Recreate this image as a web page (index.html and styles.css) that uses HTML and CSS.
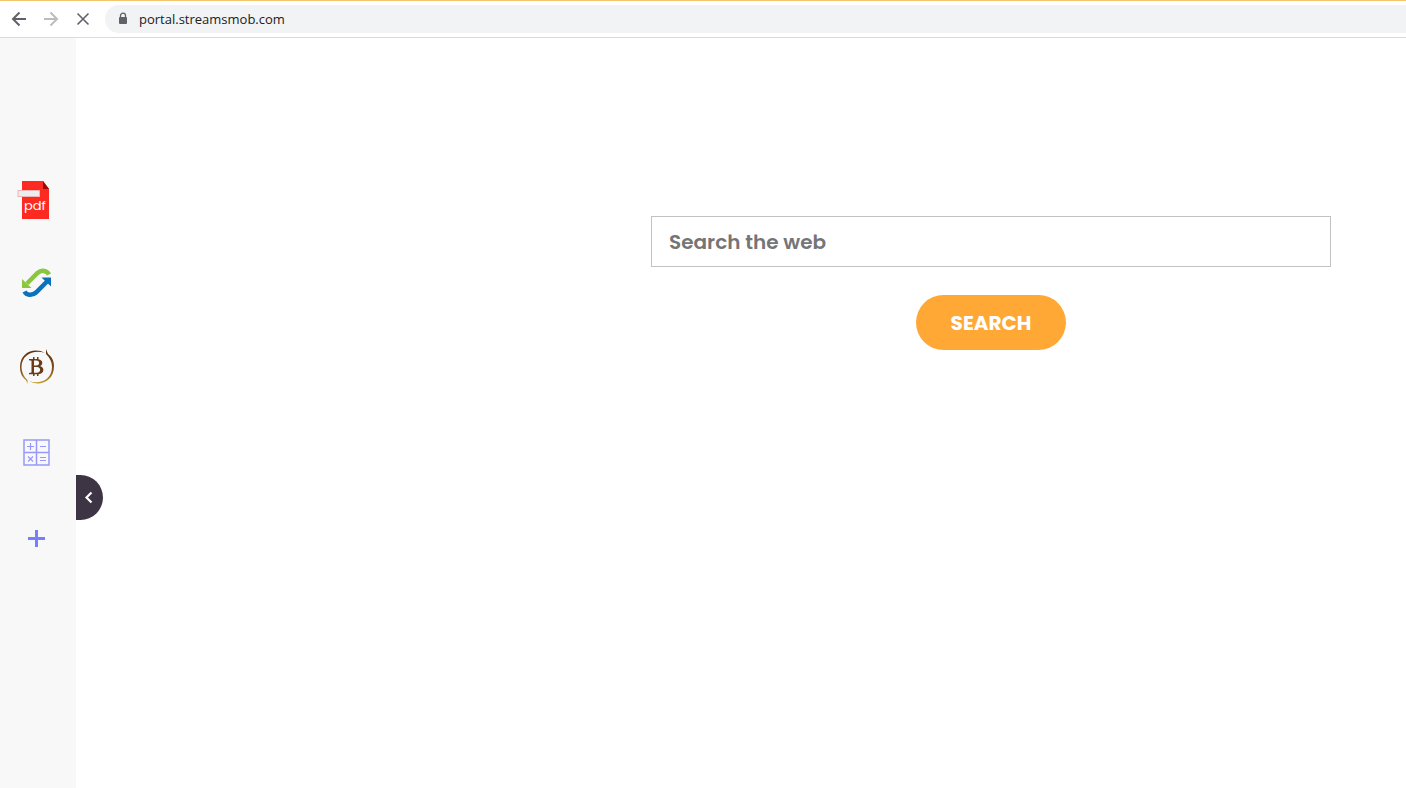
FILE: index.html
```html
<!DOCTYPE html>
<html lang="en">
<head>
    <meta charset="UTF-8">
    <meta name="viewport" content="width=device-width, initial-scale=1.0">
    <title>portal.streamsmob.com</title>
    <link rel="stylesheet" href="styles.css">
</head>
<body>
    <header class="toolbar">
        <button type="button" class="nav-btn" aria-label="Back">
            <svg width="16" height="16" viewBox="0 0 16 16"><path d="M15 8H2.500M8.500 1.500L2 8l6.500 6.500"/></svg>
        </button>
        <button type="button" class="nav-btn disabled" aria-label="Forward" disabled>
            <svg width="16" height="16" viewBox="0 0 16 16"><path d="M1 8h12.500M7.500 1.500L14 8l-6.500 6.500"/></svg>
        </button>
        <button type="button" class="nav-btn stop" aria-label="Stop loading">
            <svg width="16" height="16" viewBox="0 0 16 16"><path d="M2.500 2.500l11 11M13.500 2.500l-11 11"/></svg>
        </button>
        <div class="address">
            <svg class="lock" width="10" height="14" viewBox="0 0 10 14">
                <path d="M2.500 6V3.700a2.500 2.500 0 0 1 5 0V6" fill="none" stroke="#5f6368" stroke-width="1.300"/>
                <rect x="1" y="5" width="8" height="7" rx="1" fill="#5f6368"/>
            </svg>
            <input type="text" class="url" aria-label="Address" value="portal.streamsmob.com">
        </div>
    </header>

    <div class="page">
        <nav class="sidebar">
            <a href="#" class="app" aria-label="PDF">
                <svg width="54" height="54" viewBox="0 -3 54 54">
                    <path d="M12 7h21l6 8v30H12z" fill="#fc2a20"/>
                    <path d="M33 7l6 8h-6z" fill="#980d08"/>
                    <rect x="8" y="16.500" width="21.500" height="6" fill="#ececec" stroke="#e9b5b5"/>
                    <text x="14" y="36" class="pdf-text">pdf</text>
                </svg>
            </a>
            <a href="#" class="app" aria-label="Convert">
                <svg width="54" height="54" viewBox="0 0 54 54">
                    <path d="M39 18.500c-2-4-7.500-5-11.500-1.500L17 27.500" fill="none" stroke="#8bc63f" stroke-width="4.500"/>
                    <path d="M12 23v9h9.500z" fill="#8bc63f"/>
                    <path d="M14.500 35.500c2 4 7.500 4.500 11.500 1L37 25.500" fill="none" stroke="#0a71bd" stroke-width="4.500"/>
                    <path d="M31.500 21.500H41v9z" fill="#0a71bd"/>
                </svg>
            </a>
            <a href="#" class="app" aria-label="Bitcoin">
                <svg width="54" height="54" viewBox="0 1 54 54">
                    <defs>
                        <linearGradient id="gold" x1="0" y1="0" x2="0" y2="1">
                            <stop offset="0" stop-color="#5d300f"/>
                            <stop offset=".6" stop-color="#84501a"/>
                            <stop offset="1" stop-color="#c3a12c"/>
                        </linearGradient>
                    </defs>
                    <path fill="url(#gold)" d="M35 13C25 7 10 12 10 27c0 7 3 11 6 13l1.500 4v-4C14 37 11.500 32 11.500 27c0-13 13-18 23.500-14z"/>
                    <path fill="url(#gold)" d="M19 41c10 6 25 1 25-15 0-6-3-10-6-12l-2-5v5c4 4 6 8 6 13 0 13-13 18-23 14z"/>
                    <path fill="#6b3b18" fill-rule="evenodd" d="M19 19h4v-2h1.500v2H27v-2h1.500v2.200c4.500.6 5 5.500 1.500 6.800 5 1.200 4.500 7.700-1.500 8.200V36H27v-1.800h-2.500V36H23v-1.800h-4V33l2.500-.5V20.700L19 20.200zM24 20.500v5h2.500c3.500 0 3.500-5 0-5zM24 27v5.700h3c4.200 0 4.200-5.700 0-5.700z"/>
                </svg>
            </a>
            <a href="#" class="app" aria-label="Calculator">
                <svg width="54" height="54" viewBox="0 0 54 54" fill="none" stroke="#9698fa">
                    <path d="M14 14h25v25H14zM26.500 14v25M14 26.500h25" stroke-width="1.500"/>
                    <path d="M17 20.500h7M20.500 17v7M30 20.500h6M18 30.500l5 5M23 30.500l-5 5M30 31.500h6M30 34.500h6" stroke-width="1.200"/>
                </svg>
            </a>
            <button type="button" class="app" aria-label="Add">
                <svg width="54" height="54" viewBox="0 -1 54 54"><path d="M18 25h17v3H18zM25 18h3v17h-3z" fill="#7480ff"/></svg>
            </button>
            <button type="button" class="collapse" aria-label="Collapse sidebar">
                <svg width="10" height="14" viewBox="0 0 10 14"><path d="M7.500 1.500L2.500 6.500l5 5" fill="none" stroke="#fff" stroke-width="2.200"/></svg>
            </button>
        </nav>

        <main class="content">
            <form class="search-form">
                <input type="text" class="search-input" placeholder="Search the web" aria-label="Search the web">
                <button type="submit" class="search-btn">SEARCH</button>
            </form>
        </main>
    </div>
</body>
</html>
```

FILE: styles.css
```css
* {
    box-sizing: border-box;
}
body {
    margin: 0;
    min-height: 100vh;
    display: flex;
    flex-direction: column;
    background-color: #fff;
    font-family: Poppins, Inter, sans-serif;
}
button {
    padding: 0;
    border: none;
    background: none;
    cursor: pointer;
}
svg {
    display: block;
}

.toolbar {
    display: flex;
    align-items: center;
    gap: 16px;
    height: 38px;
    padding-left: 11px;
    border-top: 1px solid #f2c66d;
    border-bottom: 1px solid #dadbdd;
}
.nav-btn path {
    fill: none;
    stroke: #5f6368;
    stroke-width: 2;
}
.nav-btn.disabled path {
    stroke: #babcbe;
}
.nav-btn.stop path {
    stroke-width: 1.6;
}
.address {
    flex: 1;
    display: flex;
    align-items: center;
    gap: 11px;
    height: 28px;
    margin-left: -2px;
    padding-left: 13px;
    border-radius: 14px 0 0 14px;
    background-color: #f1f3f4;
}
.url {
    flex: 1;
    padding: 0;
    border: none;
    outline: none;
    background: none;
    color: #202124;
    font: 13px "Segoe UI", "Open Sans", sans-serif;
}

.page {
    flex: 1;
    display: flex;
}
.sidebar {
    position: relative;
    display: flex;
    flex-direction: column;
    align-items: flex-start;
    gap: 31px;
    width: 76px;
    padding: 133px 0 0 10px;
    background-color: #f8f8f8;
}
.pdf-text {
    fill: #fff;
    font: 400 13px Poppins, Lato, sans-serif;
}
.collapse {
    position: absolute;
    top: 437px;
    left: 100%;
    display: flex;
    align-items: center;
    width: 27px;
    height: 45px;
    padding-left: 8px;
    border-radius: 0 23px 23px 0;
    background-color: #3d3543;
}

.content {
    flex: 1;
    padding: 178px 75px 0 0;
}
.search-form {
    display: flex;
    flex-direction: column;
    align-items: center;
    gap: 28px;
    width: 100%;
    max-width: 680px;
    margin-left: auto;
}
.search-input {
    width: 100%;
    height: 51px;
    padding: 0 17px;
    border: 1px solid #c2c2c2;
    color: #333;
    font: 600 20px Poppins, Inter, sans-serif;
}
.search-input::placeholder {
    color: #757575;
}
.search-btn {
    height: 55px;
    padding: 0 35px;
    border-radius: 28px;
    background-color: #ffa836;
    color: #fff;
    font: 700 20px Poppins, Inter, sans-serif;
}
```
